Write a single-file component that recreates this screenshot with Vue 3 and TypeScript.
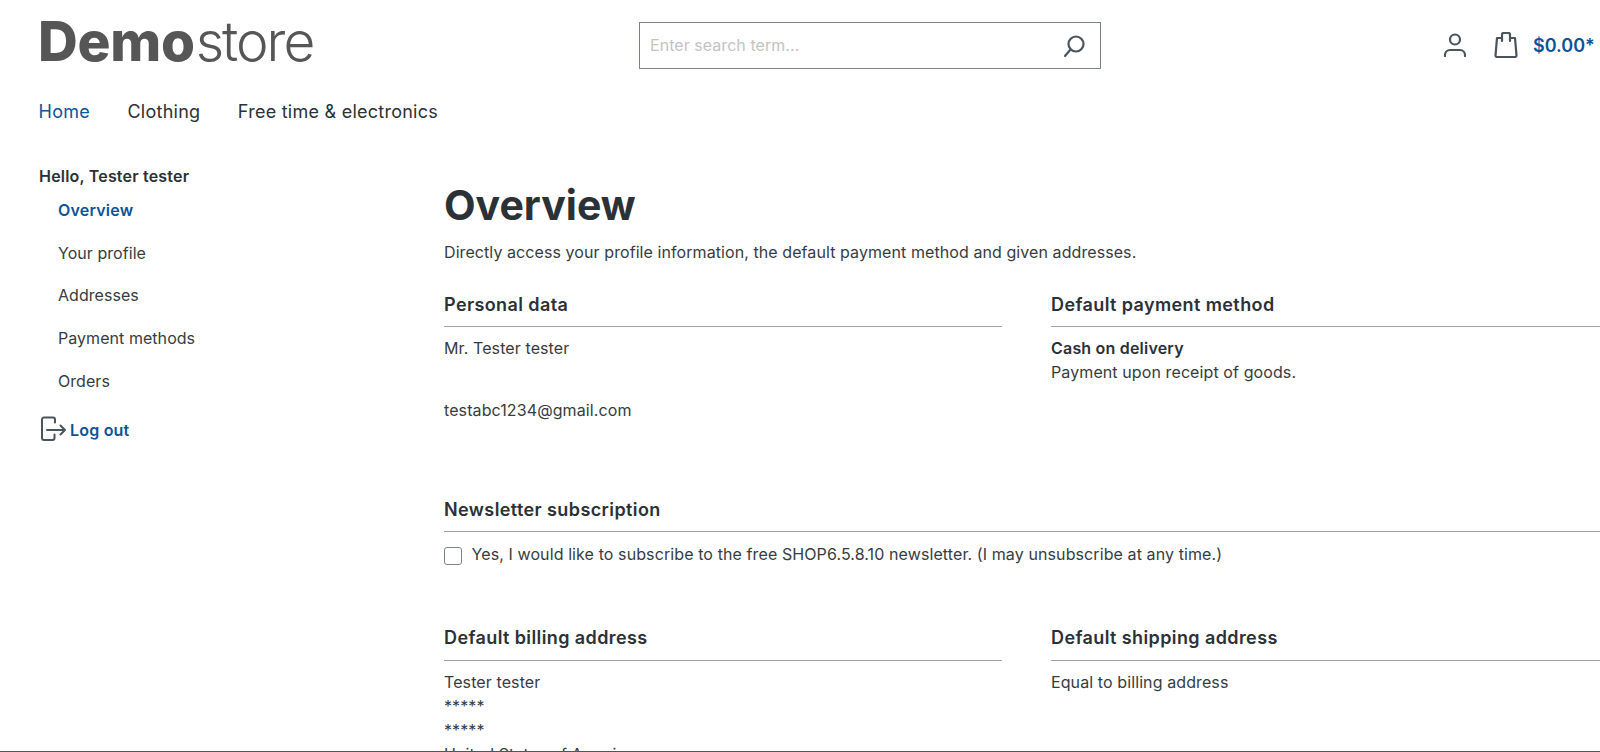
<script setup lang="ts">
const menu: string[] = ['Your profile', 'Addresses', 'Payment methods', 'Orders']
</script>

<template>
  <div class="page">
    <header class="header">
      <div class="logo"><b>Demo</b><span>store</span></div>
      <div class="search">
        <span class="placeholder">Enter search term...</span>
        <svg class="search-icon" width="24" height="24" viewBox="0 0 24 24" fill="none" stroke="#4a545b" stroke-width="2.200" stroke-linecap="round">
          <circle cx="14" cy="10" r="7.500" />
          <path d="M8.500 15.500 3 22" />
        </svg>
      </div>
      <div class="actions">
        <svg width="24" height="24" viewBox="0 0 24 24" fill="none" stroke="#4a545b" stroke-width="2.200" stroke-linecap="round">
          <circle cx="12" cy="6.500" r="5" />
          <path d="M2 23v-1a5 5 0 0 1 5-5h10a5 5 0 0 1 5 5v1" />
        </svg>
        <svg class="bag" width="24" height="26" viewBox="0 0 24 26" fill="none" stroke="#4a545b" stroke-width="2.200" stroke-linejoin="round" stroke-linecap="round">
          <path d="M8 6H3L1.500 23.500A1.500 1.500 0 0 0 3 25H21A1.500 1.500 0 0 0 22.500 23.500L21 6H16" />
          <path d="M8 9V2.500A1.500 1.500 0 0 1 9.500 1h5A1.500 1.500 0 0 1 16 2.500V9" />
        </svg>
        <span class="price">$0.00*</span>
      </div>
    </header>
    <nav class="nav">
      <a class="active">Home</a>
      <a>Clothing</a>
      <a>Free time &amp; electronics</a>
    </nav>
    <div class="main">
      <aside class="side">
        <div class="hello">Hello, Tester tester</div>
        <div class="side-item current">Overview</div>
        <div v-for="m in menu" :key="m" class="side-item">{{ m }}</div>
        <div class="logout">
          <svg class="logout-icon" width="26" height="26" viewBox="0 0 26 26" fill="none" stroke="#4a545b" stroke-width="2" stroke-linecap="round" stroke-linejoin="round">
            <path d="M15 6.500V3.500A2 2 0 0 0 13 1.500H4A2 2 0 0 0 2 3.500V22A2 2 0 0 0 4 24H12.500A2 2 0 0 0 14.500 22V18.500" />
            <path d="M7 14H25M20.500 9.500 25 14l-4.500 4.500" />
          </svg>
          <span>Log out</span>
        </div>
      </aside>
      <main class="content">
        <h1>Overview</h1>
        <p class="lead">Directly access your profile information, the default payment method and given addresses.</p>
        <div class="row first">
          <section class="col">
            <h2>Personal data</h2>
            <div class="text">Mr. Tester tester</div>
            <div class="text email">testabc1234@gmail.com</div>
          </section>
          <section class="col">
            <h2>Default payment method</h2>
            <div class="text strong">Cash on delivery</div>
            <div class="text">Payment upon receipt of goods.</div>
          </section>
        </div>
        <section class="news">
          <h2 class="wide">Newsletter subscription</h2>
          <label class="check">
            <span class="box"></span>
            <span>Yes, I would like to subscribe to the free SHOP6.5.8.10 newsletter. (I may unsubscribe at any time.)</span>
          </label>
        </section>
        <div class="row addresses">
          <section class="col">
            <h2>Default billing address</h2>
            <div class="text">Tester tester</div>
            <div class="text">*****</div>
            <div class="text">*****</div>
            <div class="text">United States of America</div>
          </section>
          <section class="col">
            <h2>Default shipping address</h2>
            <div class="text">Equal to billing address</div>
          </section>
        </div>
      </main>
    </div>
    <div class="edge"></div>
  </div>
</template>

<style>
html, body { margin: 0; background: #fff; overflow: hidden; }
</style>

<style scoped>
.page {
  position: relative;
  width: 1600px;
  height: 752px;
  overflow: hidden;
  font-family: Inter, "Liberation Sans", sans-serif;
  color: #363c41;
  font-size: 16px;
  line-height: 24px;
}
.header { display: flex; align-items: flex-start; height: 92px; padding-left: 38px; }
.logo { width: 601px; margin-top: 8px; font-size: 55px; line-height: 66px; color: #565656; }
.logo b { font-weight: 800; letter-spacing: -0.300px; }
.logo span { font-weight: 300; letter-spacing: -2px; margin-left: 1px; }
.search {
  display: flex; align-items: center; justify-content: space-between;
  width: 462px; height: 47px; margin-top: 22px; box-sizing: border-box;
  border: 1px solid #798490; padding: 0 14px 0 10px;
}
.placeholder { color: #c3c3c3; font-size: 16px; letter-spacing: 0.05px; margin-top: -2px; }
.actions { display: flex; align-items: center; margin-top: 32px; margin-left: 342px; }
.bag { margin-left: 27px; }
.price { margin-left: 15px; margin-top: 2px; color: #0b539b; font-size: 18px; font-weight: 600; white-space: nowrap; }
.nav { display: flex; gap: 37.500px; padding-left: 38.500px; height: 40px; font-size: 18px; line-height: 40px; letter-spacing: 0.25px; color: #2b3136; }
.nav .active { color: #0b539b; }
.main { display: flex; padding-top: 32px; }
.side { width: 444px; flex: none; padding-left: 39px; box-sizing: border-box; letter-spacing: 0.05px; }
.hello { font-weight: 600; letter-spacing: 0.2px; margin-bottom: 10px; color: #2b3136; }
.side-item { padding-left: 19px; margin-bottom: 18.700px; }
.current { color: #0b539b; font-weight: 600; letter-spacing: 0.2px; }
.logout { display: flex; align-items: center; gap: 4px; color: #0b539b; font-weight: 600; letter-spacing: 0.2px; margin-top: 23px; }
.logout-icon { margin-bottom: 2px; margin-left: 1px; }
.content { width: 1165px; flex: none; letter-spacing: 0.1px; }
h1 { margin: 16px 0 0; font-size: 41px; line-height: 50px; font-weight: 700; letter-spacing: 0; color: #2b3136; }
.lead { margin: 10px 0 0; letter-spacing: 0.08px; }
.row { display: flex; gap: 49px; }
.first { margin-top: 29px; height: 205px; }
.col { width: 558px; flex: none; }
h2 { margin: 0 0 9px; font-size: 18px; line-height: 24px; font-weight: 600; letter-spacing: 0.4px; padding-bottom: 9px; border-bottom: 1px solid #9aa3af; color: #2b3136; }
.strong { font-weight: 600; letter-spacing: 0.2px; color: #2b3136; }
.email { margin-top: 38px; }
.news { height: 128px; }
.addresses h2 { padding-bottom: 10px; }
.wide { margin-bottom: 10px; }
.check { display: flex; gap: 9.500px; }
.box { width: 18px; height: 18px; box-sizing: border-box; border: 1px solid #798490; border-radius: 3px; margin-top: 5px; flex: none; }
.edge { position: absolute; left: 0; right: 0; bottom: 0; height: 1px; background: #555; }
</style>
